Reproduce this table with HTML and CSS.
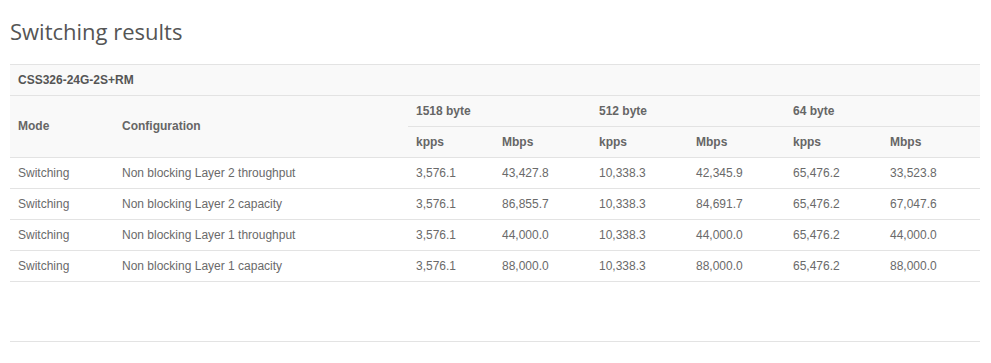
FILE: index.html
```html
<!DOCTYPE html>
<html lang="en">
<head>
    <meta charset="UTF-8">
    <meta name="viewport" content="width=device-width, initial-scale=1.0">
    <title>Switching results</title>
    <link rel="stylesheet" href="styles.css">
</head>
<body>
    <div class="section">
        <h2 class="section-title">Switching results</h2>

        <table class="results">
            <colgroup>
                <col class="col-mode">
                <col class="col-config">
                <col class="col-first">
                <col class="col-num">
                <col class="col-num">
                <col class="col-num">
                <col class="col-num">
                <col class="col-last">
            </colgroup>
            <thead>
                <tr class="model-row">
                    <th colspan="8">CSS326-24G-2S+RM</th>
                </tr>
                <tr>
                    <th rowspan="2">Mode</th>
                    <th rowspan="2">Configuration</th>
                    <th colspan="2">1518 byte</th>
                    <th colspan="2">512 byte</th>
                    <th colspan="2">64 byte</th>
                </tr>
                <tr>
                    <th>kpps</th>
                    <th>Mbps</th>
                    <th>kpps</th>
                    <th>Mbps</th>
                    <th>kpps</th>
                    <th>Mbps</th>
                </tr>
            </thead>
            <tbody>
                <tr>
                    <td>Switching</td>
                    <td>Non blocking Layer 2 throughput</td>
                    <td>3,576.1</td>
                    <td>43,427.8</td>
                    <td>10,338.3</td>
                    <td>42,345.9</td>
                    <td>65,476.2</td>
                    <td>33,523.8</td>
                </tr>
                <tr>
                    <td>Switching</td>
                    <td>Non blocking Layer 2 capacity</td>
                    <td>3,576.1</td>
                    <td>86,855.7</td>
                    <td>10,338.3</td>
                    <td>84,691.7</td>
                    <td>65,476.2</td>
                    <td>67,047.6</td>
                </tr>
                <tr>
                    <td>Switching</td>
                    <td>Non blocking Layer 1 throughput</td>
                    <td>3,576.1</td>
                    <td>44,000.0</td>
                    <td>10,338.3</td>
                    <td>44,000.0</td>
                    <td>65,476.2</td>
                    <td>44,000.0</td>
                </tr>
                <tr>
                    <td>Switching</td>
                    <td>Non blocking Layer 1 capacity</td>
                    <td>3,576.1</td>
                    <td>88,000.0</td>
                    <td>10,338.3</td>
                    <td>88,000.0</td>
                    <td>65,476.2</td>
                    <td>88,000.0</td>
                </tr>
            </tbody>
        </table>

        <div class="section-end"></div>
    </div>
</body>
</html>
```

FILE: styles.css
```css
/* Basic Reset */
* {
    margin: 0;
    padding: 0;
    box-sizing: border-box;
}

body {
    font-family: 'Liberation Sans', Arial, sans-serif;
    background-color: #fff;
    color: #666;
    padding: 0 11px 0 10px;
}

.section-title {
    font-family: 'Open Sans', sans-serif;
    font-weight: 400;
    font-size: 22px;
    line-height: 30px;
    color: #555;
    padding-top: 16px;
    margin-bottom: 18px;
}

.results {
    width: 970px;
    border-collapse: collapse;
    table-layout: fixed;
    font-size: 12px;
}

.col-mode { width: 104px; }
.col-config { width: 294px; }
.col-first { width: 86px; }
.col-num { width: 97px; }
.col-last { width: 98px; }

.results th,
.results td {
    height: 31px;
    padding: 0 8px;
    text-align: left;
    vertical-align: middle;
    border-top: 1px solid #e3e3e3;
    line-height: 15px;
}

.results th {
    background-color: #f9f9f9;
    font-weight: bold;
    color: #666;
}

.results .model-row th {
    color: #555;
}

.results tbody tr:last-child td {
    border-bottom: 1px solid #e3e3e3;
}

.results tbody td {
    color: #6a6a6a;
}

.section-end {
    margin-top: 59px;
    border-top: 1px solid #e3e3e3;
    width: 970px;
}
```
